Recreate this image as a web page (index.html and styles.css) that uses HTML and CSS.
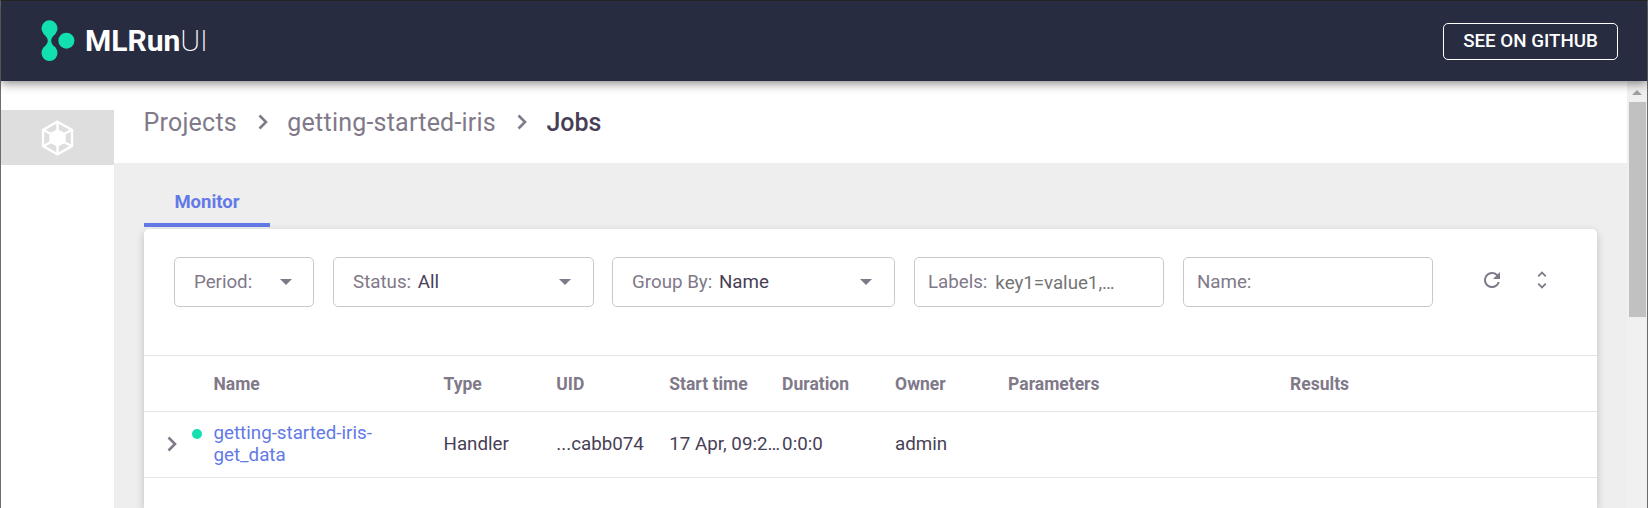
FILE: index.html
```html
<!DOCTYPE html>
<html lang="en">
<head>
<meta charset="utf-8">
<title>MLRun UI</title>
<link rel="stylesheet" href="styles.css">
</head>
<body>
<div class="app">
  <header class="header">
    <div class="brand">
      <svg class="brand-logo" width="34" height="42" viewBox="0 0 34 42">
        <circle cx="8.5" cy="8.3" r="8"/><circle cx="8.5" cy="33" r="8"/><circle cx="25.4" cy="20.7" r="8"/>
        <path d="M2 13C5 16.5 6.8 18 6.8 20.7S5 25 2 28.5H15C12 25 10.2 23.500 10.200 20.700S12 16.500 15 13z"/>
      </svg>
      <span class="brand-name">MLRun<span class="brand-thin">UI</span></span>
    </div>
    <a class="github">SEE ON GITHUB</a>
  </header>
  <div class="body">
    <nav class="sidebar">
      <a class="side-item">
        <svg width="33" height="36" viewBox="0 0 33 36" fill="none" stroke="#fff" stroke-width="2.400">
          <path d="M16.500 1.700L31 10V26L16.500 34.300L2 26V10z"/>
          <path d="M16.500 2V10M30.500 10L23 14M30.500 26L23 22M16.500 34V26M2.500 26L10 22M2.500 10L10 14"/>
          <path d="M16.500 10.500L23.500 14.300V21.700L16.500 25.500L9.500 21.700V14.300z" fill="#fff"/>
        </svg>
      </a>
    </nav>
    <main class="main">
      <div class="breadcrumbs">
        <span class="crumb">Projects</span>
        <svg class="chevron" width="10" height="16" viewBox="0 0 10 16"><path d="M1.500 1.500L8 8L1.500 14.500"/></svg>
        <span class="crumb">getting-started-iris</span>
        <svg class="chevron" width="10" height="16" viewBox="0 0 10 16"><path d="M1.500 1.500L8 8L1.500 14.500"/></svg>
        <span class="current">Jobs</span>
      </div>
      <div class="content">
        <div class="tabs"><a class="tab">Monitor</a></div>
        <section class="card">
          <div class="filters">
            <div class="select period"><span>Period:</span><i class="caret"></i></div>
            <div class="select status"><span>Status: <b>All</b></span><i class="caret"></i></div>
            <div class="select group"><span>Group By: <b>Name</b></span><i class="caret"></i></div>
            <div class="input labels"><span>Labels:</span><span class="placeholder">key1=value1,…</span></div>
            <div class="input name"><span>Name:</span></div>
            <div class="actions">
              <svg width="16" height="16" viewBox="4 4 16 16" fill="#7f7989"><path d="M17.650 6.350A7.958 7.958 0 0 0 12 4a8 8 0 1 0 7.730 10h-2.080A6 6 0 1 1 12 6c1.660 0 3.140.69 4.220 1.780L13 11h7V4z"/></svg>
              <svg width="10" height="18" viewBox="0 0 10 18" fill="none" stroke="#7f7989" stroke-width="1.800"><path d="M1.200 5.400L5 1.600L8.800 5.400M1.200 12.600L5 16.400L8.800 12.600"/></svg>
            </div>
          </div>
          <div class="row head">
            <span></span><span>Name</span><span>Type</span><span>UID</span><span>Start time</span><span>Duration</span><span>Owner</span><span>Parameters</span><span>Results</span>
          </div>
          <div class="row item">
            <span class="toggle"><svg class="chevron" width="10" height="16" viewBox="0 0 10 16"><path d="M1.500 1.500L8 8L1.500 14.500"/></svg><i class="dot"></i></span>
            <a class="link">getting-started-iris-<br>get_data</a><span>Handler</span><span>...cabb074</span><span class="clip">17 Apr, 09:2…</span><span>0:0:0</span><span>admin</span><span></span><span></span>
          </div>
        </section>
      </div>
    </main>
    <div class="scrollbar"><i class="arrow"></i><div class="thumb"></div></div>
  </div>
</div>
</body>
</html>
```
FILE: styles.css
```css
* { box-sizing: border-box; }
body {
  margin: 0;
  height: 508px;
  overflow: hidden;
  background: #fff;
  font-family: Roboto, "Liberation Sans", sans-serif;
  font-size: 18.75px;
  color: #483f56;
}
svg { display: block; flex: none; }
.app {
  height: 508px;
  display: flex;
  flex-direction: column;
  border: 1px solid #6c6c70;
  border-top-color: #2a2a2a;
  border-bottom: 0;
}
.header {
  position: relative;
  z-index: 1;
  flex: 0 0 80px;
  display: flex;
  align-items: center;
  justify-content: space-between;
  padding: 0 29px 0 40px;
  background: #282c41;
  box-shadow: 0 2px 10px rgba(0, 0, 0, .5);
}
.brand { display: flex; align-items: center; gap: 10px; color: #fff; font-size: 30px; font-weight: 700; }
.brand-logo { fill: #13e0b1; }
.brand-name { line-height: 36px; white-space: nowrap; }
.brand-thin { font-weight: 200; letter-spacing: -.3px; }
.github {
  width: 175px;
  height: 37px;
  margin-top: 1px;
  border: 1px solid #fff;
  border-radius: 5px;
  color: #fff;
  font-weight: 500;
  line-height: 34px;
  text-align: center;
  white-space: nowrap;
}
.body { flex: 1; display: flex; min-height: 0; }
.sidebar { flex: 0 0 113px; padding-top: 29px; background: #fff; }
.side-item { display: flex; align-items: center; justify-content: center; height: 55px; background: #dedede; }
.main { flex: 1; display: flex; flex-direction: column; min-width: 0; }
.breadcrumbs {
  flex: 0 0 82px;
  display: flex;
  align-items: center;
  padding-left: 29.500px;
  gap: 21px;
  background: #fff;
  color: #7f7989;
  font-size: 25px;
}
.crumb { letter-spacing: .22px; }
.current { color: #483f56; font-weight: 500; }
.chevron { fill: none; stroke: #7f7989; stroke-width: 2.600; }
.breadcrumbs .chevron { margin-right: -1.600px; }
.content { flex: 1; min-height: 0; padding: 19px 30px 0; background: #eee; display: flex; flex-direction: column; }
.tabs { display: flex; height: 47px; }
.tab {
  width: 126px;
  height: 45px;
  border-bottom: 4px solid #6279e7;
  color: #6279e7;
  font-weight: 700;
  font-size: 18.500px;
  line-height: 41px;
  text-align: center;
}
.card { flex: 1; min-height: 0; background: #fff; border-radius: 5px 5px 0 0; box-shadow: 0 3px 8px rgba(0, 0, 0, .2); }
.filters { display: flex; height: 126px; padding: 28px 0 0 30px; color: #7f7989; }
.select, .input {
  display: flex;
  align-items: center;
  height: 50px;
  border: 1px solid #c9c9cb;
  border-radius: 5px;
  white-space: nowrap;
}
.select { justify-content: space-between; padding: 0 21.500px 0 19px; margin-right: 19px; }
.select b { margin-left: 2px; font-weight: 400; color: #483f56; }
.input { padding: 0 13px; margin-right: 19px; }
.period { width: 140px; }
.period, .input { letter-spacing: -.03px; }
.status { width: 261px; margin-right: 18px; }
.group { width: 283px; }
.labels { width: 250px; }
.name { width: 250px; }
.placeholder { margin: 2px 0 0 8px; color: #757575; }
.caret { border: 6.500px solid transparent; border-top-color: #7f7989; border-bottom: 0; }
.status .caret, .group .caret { margin-right: 1px; }
.actions { display: flex; align-items: center; gap: 37px; height: 46px; margin-left: 32px; }
.row {
  display: grid;
  grid-template-columns: 69.500px 230px 112.800px 113px 112.800px 113px 113px 282px 1fr;
  align-items: center;
  border-top: 1px solid #e6e6e6;
  white-space: nowrap;
}
.head { height: 56px; color: #7f7989; font-weight: 700; font-size: 17.500px; }
.item { height: 67px; border-bottom: 1px solid #e6e6e6; padding-bottom: 1px; }
.link { color: #6279e7; line-height: 22.500px; }
.toggle { display: flex; align-items: center; padding-left: 22.500px; }
.dot { width: 10px; height: 10px; margin: -20px 0 0 15px; border-radius: 50%; background: #13e0b1; }
.scrollbar { flex: 0 0 20px; display: flex; flex-direction: column; align-items: center; padding-top: 9px; background: #f0f0f0; }
.arrow { border: 5px solid transparent; border-bottom-color: #a0a0a0; border-top: 0; }
.thumb { width: 17px; height: 215px; margin-top: 7px; background: #c1c1c1; }
```
